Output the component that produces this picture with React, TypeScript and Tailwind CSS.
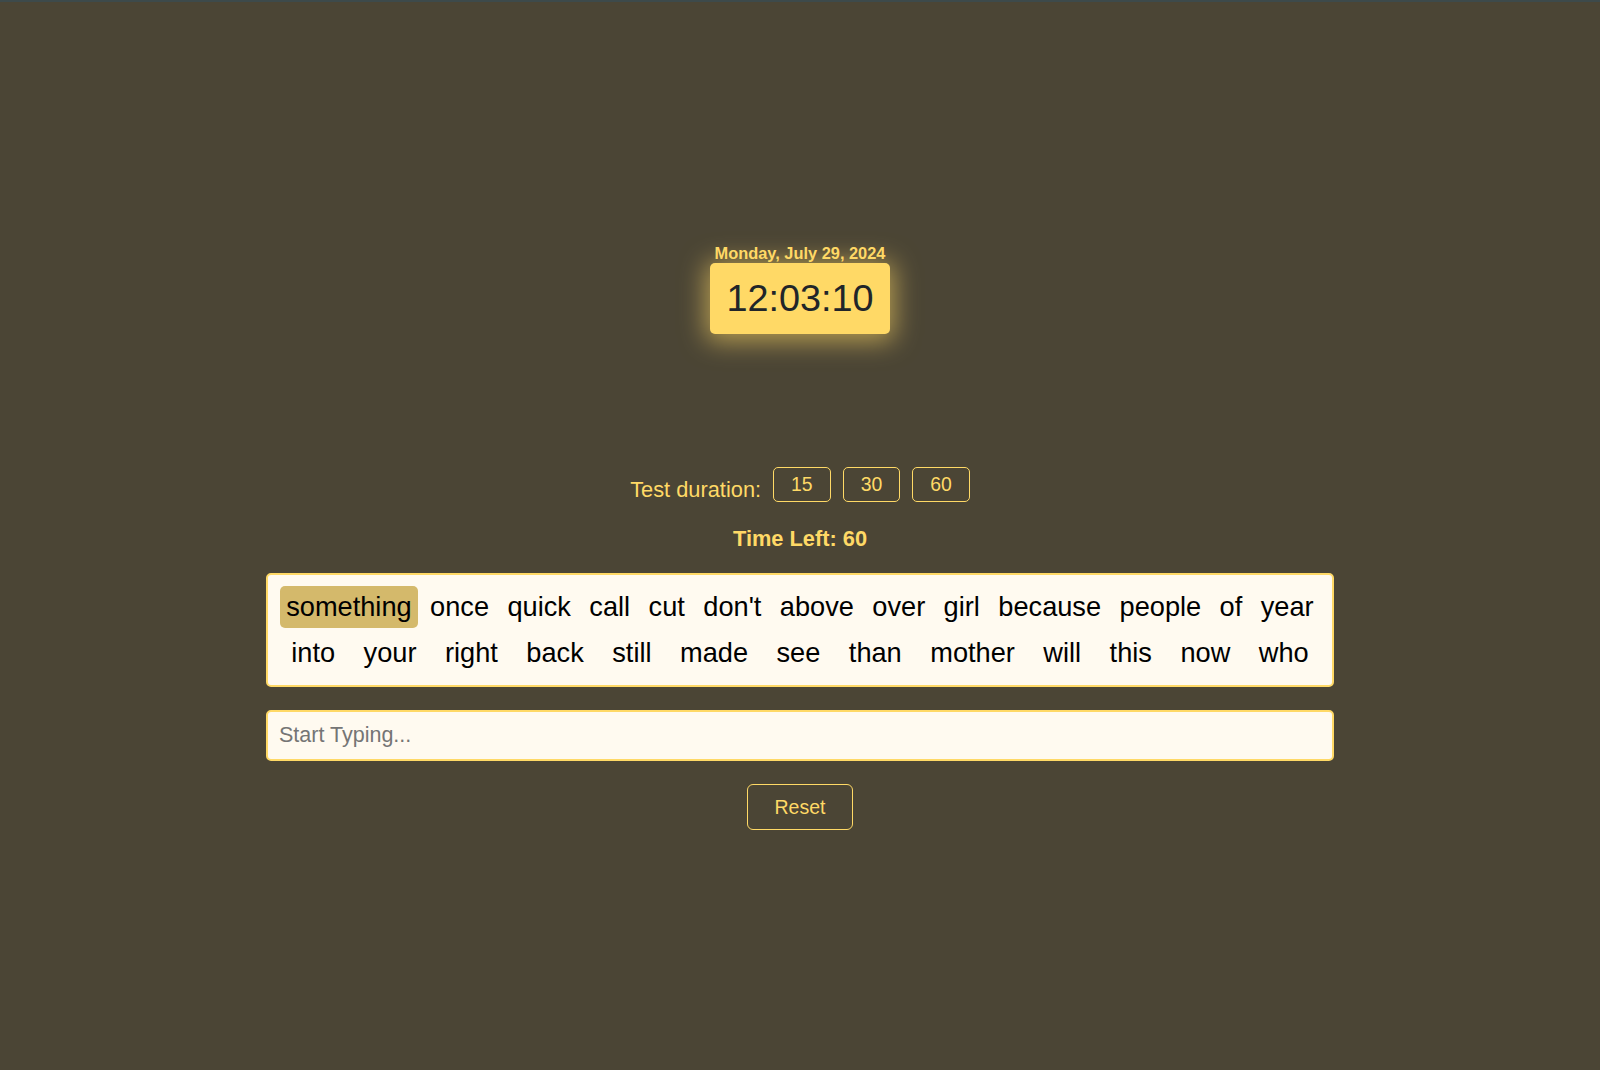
const firstLine = [
  "something",
  "once",
  "quick",
  "call",
  "cut",
  "don't",
  "above",
  "over",
  "girl",
  "because",
  "people",
  "of",
  "year",
];
const secondLine = [
  "into",
  "your",
  "right",
  "back",
  "still",
  "made",
  "see",
  "than",
  "mother",
  "will",
  "this",
  "now",
  "who",
];

const durations = [15, 30, 60];

function Clock() {
  return (
    <div className="flex flex-col items-center">
      <div className="text-[16.4px] font-bold leading-[19px] text-[#ffd966]">
        Monday, July 29, 2024
      </div>
      <div className="rounded-[5px] bg-[#ffd966] px-[16px] py-[14px] text-[37.8px] leading-[42.5px] text-[#212529] shadow-[0_3px_26px_4px_rgba(255,217,102,0.6)]">
        12:03:10
      </div>
    </div>
  );
}

function WordsBox() {
  const words = [...firstLine, ...secondLine];
  return (
    <div className="flex w-[1068px] flex-wrap justify-around rounded-[5px] border-2 border-[#ffd966] bg-[#fffaf0] p-[9px]">
      {words.map((word, i) => (
        <span
          key={i}
          className={
            i === 0
              ? "m-[2px] rounded-[5px] bg-[#d4b96b] px-[6px] py-[5px] text-[27.2px] leading-[32px] text-black"
              : "m-[2px] rounded-[5px] px-[6px] py-[5px] text-[27.2px] leading-[32px] text-black"
          }
        >
          {word}
        </span>
      ))}
    </div>
  );
}

export default function App() {
  return (
    <div className="min-h-screen border-t-2 border-[#3d4a4b] bg-[#4b4535] font-['Liberation_Sans',Arial,sans-serif]">
      <div className="flex flex-col items-center pt-[242px]">
        <Clock />

        <div className="mt-[133px] flex items-end gap-3">
          <span className="text-[21.8px] leading-[25px] text-[#ffd966]">
            Test duration:
          </span>
          {durations.map((d) => (
            <button
              key={d}
              className="rounded-[5px] border border-[#ffd966] px-[17px] py-[5.5px] text-[19.4px] leading-[22px] text-[#ffd966]"
            >
              {d}
            </button>
          ))}
        </div>

        <div className="mt-[24px] text-[21.8px] font-bold leading-[25px] text-[#ffd966]">
          Time Left: 60
        </div>

        <div className="mt-[22px]">
          <WordsBox />
        </div>

        <input
          type="text"
          placeholder="Start Typing..."
          className="mt-[23px] w-[1068px] rounded-[5px] border-2 border-[#ffd966] bg-[#fffaf0] px-[11px] py-[11px] text-[21.5px] leading-[25px] text-black outline-none placeholder:text-[#757575]"
        />

        <button className="mt-[23px] rounded-[6px] border border-[#ffd966] px-[27px] py-[11px] text-[19.5px] leading-[22px] text-[#ffd966]">
          Reset
        </button>
      </div>
    </div>
  );
}
